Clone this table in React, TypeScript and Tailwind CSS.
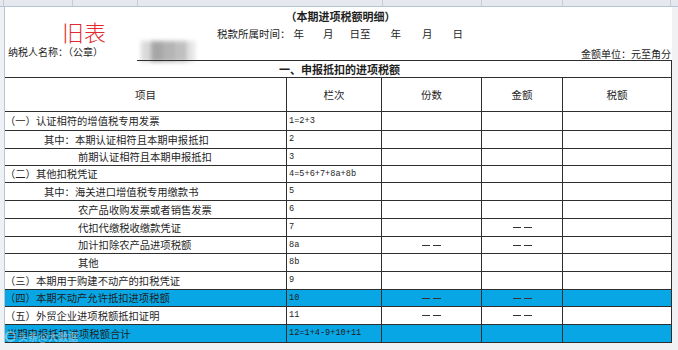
type Row = {
  label: string
  pad: string
  code: string
  h: string
  blue?: boolean
  cntDash?: boolean
  amtDash?: boolean
}

const rows: Row[] = [
  { label: '（一）认证相符的增值税专用发票', pad: 'pl-0', code: '1=2+3', h: 'h-[19px]' },
  { label: '其中：本期认证相符且本期申报抵扣', pad: 'pl-[39px]', code: '2', h: 'h-[18px]' },
  { label: '前期认证相符且本期申报抵扣', pad: 'pl-[73px]', code: '3', h: 'h-[17px]' },
  { label: '（二）其他扣税凭证', pad: 'pl-0', code: '4=5+6+7+8a+8b', h: 'h-[17px]' },
  { label: '其中：海关进口增值税专用缴款书', pad: 'pl-[39px]', code: '5', h: 'h-[18px]' },
  { label: '农产品收购发票或者销售发票', pad: 'pl-[73px]', code: '6', h: 'h-[18px]' },
  { label: '代扣代缴税收缴款凭证', pad: 'pl-[73px]', code: '7', h: 'h-[18px]', amtDash: true },
  { label: '加计扣除农产品进项税额', pad: 'pl-[73px]', code: '8a', h: 'h-[17px]', cntDash: true, amtDash: true },
  { label: '其他', pad: 'pl-[73px]', code: '8b', h: 'h-[18px]' },
  { label: '（三）本期用于购建不动产的扣税凭证', pad: 'pl-0', code: '9', h: 'h-[18px]' },
  { label: '（四）本期不动产允许抵扣进项税额', pad: 'pl-0', code: '10', h: 'h-[17px]', blue: true, cntDash: true, amtDash: true },
  { label: '（五）外贸企业进项税额抵扣证明', pad: 'pl-0', code: '11', h: 'h-[18px]', cntDash: true, amtDash: true },
  { label: '当期申报抵扣进项税额合计', pad: 'pl-[2px]', code: '12=1+4-9+10+11', h: 'h-[18px]', blue: true },
]

function Dash() {
  return (
    <span className="flex gap-[3px]">
      <span className="block h-px w-[8px] bg-[#333]" />
      <span className="block h-px w-[8px] bg-[#333]" />
    </span>
  )
}

export default function App() {
  return (
    <div className="relative h-[350px] w-[678px] overflow-hidden bg-[#f1f1f4] text-[#1e1e1e] [font-family:'Noto_Sans_CJK_SC','Liberation_Sans',sans-serif]">
      {/* spreadsheet column strip */}
      <div className="flex h-[7px] border-b border-[#b6c4d6] bg-[#e5e9ef]">
        <div className="w-[4px] border-r border-[#c3ccd8]" />
        <div className="w-[69px] border-r border-[#c3ccd8]" />
        <div className="w-[65px] border-r border-[#c3ccd8]" />
        <div className="w-[245px] border-r border-[#c3ccd8]" />
        <div className="w-[99px] border-r border-[#c3ccd8]" />
        <div className="w-[81px] border-r border-[#c3ccd8]" />
        <div className="w-[108px] border-r border-[#c3ccd8]" />
      </div>

      <div className="flex">
        <div className="w-[5px] shrink-0 border-r border-[#b9c3d1] bg-[#eef1f5]" />

        <div className="relative w-[667px] bg-white">
          {/* form heading */}
          <div className="flex h-[18px] items-center justify-center text-[11px] font-bold">
            <span className="ml-[4px]">（本期进项税额明细）</span>
          </div>
          <div className="flex h-[18px] items-center text-[10.5px]">
            <div className="w-[212px] pl-[57px]">
              <span className="-mt-[6px] block text-[22px] leading-none font-light text-[#e2292d]">旧表</span>
            </div>
            <span>税款所属时间：</span>
            <span className="ml-[3px]">年</span>
            <span className="ml-[19px]">月</span>
            <span className="ml-[16px]">日至</span>
            <span className="ml-[20px]">年</span>
            <span className="ml-[21px]">月</span>
            <span className="ml-[20px]">日</span>
          </div>
          <div className="flex h-[17px] items-center justify-between text-[10px]">
            <span className="pl-[3px]">纳税人名称：（公章）</span>
            <span className="mt-[3px] pr-[1px]">金额单位：元至角分</span>
          </div>

          {/* blurred name */}
          <div className="absolute left-[136px] top-[34px] flex h-[21px] w-[54px] opacity-90 blur-[2px]">
            <div className="w-[10px] bg-[#d6d6d6]" />
            <div className="w-[12px] bg-[#9d9d9d]" />
            <div className="w-[12px] bg-[#acacac]" />
            <div className="w-[12px] bg-[#b9b9b9]" />
            <div className="w-[8px] bg-[#e2e2e2]" />
          </div>

          {/* section title */}
          <div className="relative flex h-[18px] items-center justify-center border-r border-b border-[#2e2e2e] text-[11px] font-bold">
            <div className="absolute top-0 right-0 left-[132px] h-px bg-[#2e2e2e]" />
            <span className="mt-px ml-[3px]">一、申报抵扣的进项税额</span>
          </div>

          {/* column header */}
          <div className="flex h-[34px] border-r border-b border-[#2e2e2e] text-[10.5px]">
            <div className="flex w-[282px] items-center justify-center border-r border-[#2e2e2e]">项目</div>
            <div className="flex w-[95px] items-center justify-center border-r border-[#2e2e2e]">栏次</div>
            <div className="flex w-[100px] items-center justify-center border-r border-[#2e2e2e]">份数</div>
            <div className="flex w-[81px] items-center justify-center border-r border-[#2e2e2e]">金额</div>
            <div className="flex flex-1 items-center justify-center">税额</div>
          </div>

          {rows.map((row) => (
            <div
              key={row.code}
              className={`flex ${row.h} border-r border-b border-[#2e2e2e] text-[10.3px] ${row.blue ? 'bg-[#08a6e4]' : 'bg-white'}`}
            >
              <div className={`flex w-[282px] items-center border-r border-[#2e2e2e] ${row.pad}`}>
                <span className="whitespace-nowrap">{row.label}</span>
              </div>
              <div className="flex w-[95px] items-center border-r border-[#2e2e2e] pl-[2px] text-[8.6px] [font-family:'Liberation_Mono',monospace]">
                {row.code}
              </div>
              <div className="flex w-[100px] items-center justify-center border-r border-[#2e2e2e]">
                {row.cntDash ? <Dash /> : null}
              </div>
              <div className="flex w-[81px] items-center justify-center border-r border-[#2e2e2e]">
                {row.amtDash ? <Dash /> : null}
              </div>
              <div className="flex-1" />
            </div>
          ))}

          {/* watermark over the last row */}
          <div className="absolute top-[322px] left-[0px] flex items-center gap-[2px] text-[10px] font-bold text-white/40">
            <span className="block h-[11px] w-[11px] rounded-full border-2 border-white/40" />
            <span>头条@大数据</span>
          </div>
        </div>
      </div>
    </div>
  )
}
